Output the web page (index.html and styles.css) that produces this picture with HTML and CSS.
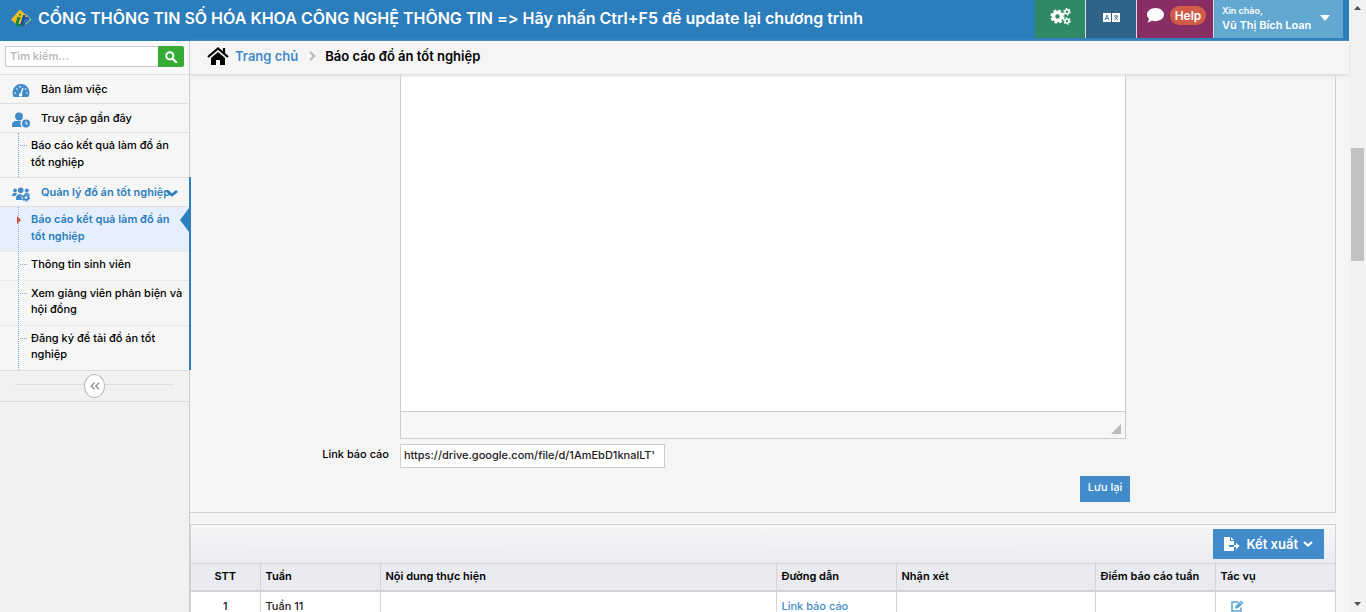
FILE: index.html
```html
<!DOCTYPE html>
<html lang="vi">
<head>
<meta charset="utf-8">
<title>Báo cáo đồ án tốt nghiệp</title>
<link rel="stylesheet" href="styles.css">
</head>
<body>
<div class="window">
  <div class="page">
    <header class="navbar">
      <a class="brand" href="#">
        <svg class="brand-logo" viewBox="0 0 22 20" aria-hidden="true">
          <path d="M10 1.500 1 11.500l5 4.500h4l7-8z" fill="#f8bb1d"/>
          <path d="M16 6.500l5 5-7 6" fill="none" stroke="#d5c464" stroke-width="1"/>
          <path d="M7.500 9h3L8.300 16.500h-3z" fill="#12844f"/>
          <circle cx="10" cy="6.800" r="1" fill="#167b5c"/>
          <path d="M13 7h2.600l-.6 2.200h3.300l-.6 2h-3.300l-1.200 4h2l-.7 2.800h-4.500z" fill="#1c4f9d"/>
          <path d="M6 16h6l-.5 2.500H7z" fill="#0e7e55"/>
        </svg>
        <span>CỔNG THÔNG TIN SỐ HÓA KHOA CÔNG NGHỆ THÔNG TIN =&gt; Hãy nhấn Ctrl+F5 để update lại chương trình</span>
      </a>
      <nav class="tools" aria-label="Tài khoản">
        <button class="tool tool-green" type="button" aria-label="Cài đặt">
          <svg width="21" height="17" viewBox="0 0 21 17" aria-hidden="true">
            <g fill="none" stroke="#fff">
              <circle cx="7.500" cy="8.500" r="4" stroke-width="3.400"/>
              <circle cx="7.500" cy="8.500" r="6" stroke-width="2.200" stroke-dasharray="2.800 1.910"/>
              <circle cx="17" cy="3.800" r="2" stroke-width="1.600"/>
              <circle cx="17" cy="3.800" r="3.200" stroke-width="1.200" stroke-dasharray="1.600 1.750"/>
              <circle cx="17" cy="13" r="2" stroke-width="1.600"/>
              <circle cx="17" cy="13" r="3.200" stroke-width="1.200" stroke-dasharray="1.600 1.750"/>
            </g>
          </svg>
        </button>
        <button class="tool tool-navy" type="button" aria-label="Ngôn ngữ">
          <svg width="17" height="9" viewBox="0 0 17 9" aria-hidden="true">
            <path fill="#fff" d="M0 0h8v9H0zM9 0h8v9H9z"/>
            <path d="M2 7l2-5 2 5M3 5.500h2M11 3h4M13 2v1M14.500 3Q14 6 11.500 7M12 4l3 3" fill="none" stroke="#2f6489" stroke-width=".8"/>
          </svg>
        </button>
        <button class="tool tool-plum" type="button">
          <svg width="17" height="15" viewBox="0 0 17 15" aria-hidden="true"><path fill="#fff" d="M8.500 0C13.200 0 17 2.900 17 6.600s-3.800 6.600-8.500 6.600c-1.300 0-2.600-.2-3.700-.7C3.700 13.500 2.200 14.300.3 14.300c1-1 1.600-2.200 1.700-3.400C.7 9.700 0 8.200 0 6.600 0 2.900 3.800 0 8.500 0z"/></svg>
          <span class="badge">Help</span>
        </button>
        <button class="tool tool-user" type="button">
          <span class="user"><small>Xin chào,</small>Vũ Thị Bích Loan</span>
          <svg width="10" height="6" viewBox="0 0 10 6" aria-hidden="true"><path d="M0 0h10L5 6z" fill="#fff"/></svg>
        </button>
      </nav>
    </header>
    <div class="body">
      <aside class="sidebar">
        <form class="search">
          <input type="text" placeholder="Tìm kiếm..." aria-label="Tìm kiếm">
          <button type="submit" aria-label="Tìm">
            <svg width="12" height="12" viewBox="0 0 12 12" aria-hidden="true"><circle cx="4.800" cy="4.800" r="3.600" fill="none" stroke="#fff" stroke-width="2"/><path d="M7.500 7.500 11 11" stroke="#fff" stroke-width="2.400" stroke-linecap="round"/></svg>
          </button>
        </form>
        <ul class="menu">
          <li><a class="item" href="#">
            <svg class="item-icon" viewBox="0 0 18 16" aria-hidden="true"><path fill="#428bca" d="M9 1a8.500 8.500 0 0 0-8.500 8.500c0 1.800.5 3.400 1.300 4.500h14.400c.8-1.100 1.300-2.700 1.300-4.500A8.500 8.500 0 0 0 9 1z"/><path d="M8.500 12 11 5" stroke="#fff" stroke-width="1.300"/><g fill="#fff"><circle cx="8.600" cy="12" r="1.700"/><circle cx="3.200" cy="10" r=".8"/><circle cx="4.800" cy="6" r=".8"/><circle cx="8" cy="3.900" r=".8"/><circle cx="13.600" cy="6" r=".8"/><circle cx="14.900" cy="10" r=".8"/></g></svg>
            <span>Bàn làm việc</span></a></li>
          <li><a class="item" href="#">
            <svg class="item-icon" viewBox="0 0 18 16" aria-hidden="true"><g fill="#428bca"><circle cx="7" cy="4.500" r="3.900"/><path d="M0 15v-2c0-2.400 1.800-4 4-4h5.200a5 5 0 0 0 .8 6z"/><circle cx="14" cy="11.500" r="4"/></g><path d="M14 9.200V12h1.800" stroke="#fff" fill="none"/></svg>
            <span>Truy cập gần đây</span></a>
            <ul class="submenu">
              <li><a href="#">Báo cáo kết quả làm đồ án tốt nghiệp</a></li>
            </ul></li>
          <li class="open"><a class="item" href="#">
            <svg class="item-icon" viewBox="0 0 18 16" aria-hidden="true"><g fill="#428bca"><circle cx="3" cy="4.500" r="1.900"/><circle cx="8.700" cy="4.300" r="2.800"/><circle cx="14.800" cy="4.500" r="1.900"/><path d="M0 10c0-2 1-3 2.500-3h2c.5 0 .7.300.7.600C4.300 8.300 3.700 9 3.500 10zM4 14v-2c0-2.300 1.500-3.800 3.500-3.800h2.600c-.8 1.800-.8 4 .5 5.800zM13 7h2.500c1.500 0 2.300.8 2.500 2l-2-1h-3z"/></g><circle cx="14" cy="11.500" r="2.300" fill="none" stroke="#428bca" stroke-width="2"/><circle cx="14" cy="11.500" r="3.600" fill="none" stroke="#428bca" stroke-width="1.200" stroke-dasharray="1.900 1.870"/></svg>
            <span>Quản lý đồ án tốt nghiệp</span>
            <svg class="item-caret" width="12" height="7" viewBox="0 0 12 7" aria-hidden="true"><path d="M1 1l5 4 5-4" fill="none" stroke="#2b7dbc" stroke-width="2.600"/></svg></a>
            <ul class="submenu">
              <li class="active"><a href="#">Báo cáo kết quả làm đồ án tốt nghiệp</a></li>
              <li><a href="#">Thông tin sinh viên</a></li>
              <li><a href="#">Xem giảng viên phản biện và hội đồng</a></li>
              <li><a href="#">Đăng ký đề tài đồ án tốt nghiệp</a></li>
            </ul></li>
        </ul>
        <div class="collapse">
          <button type="button" aria-label="Thu gọn">
            <svg width="10" height="8" viewBox="0 0 10 8" aria-hidden="true"><path d="M4.500.8 1.300 4l3.200 3.200M9 .8 5.800 4 9 7.200" fill="none" stroke="#999" stroke-width="1.600"/></svg>
          </button>
        </div>
      </aside>
      <main class="main">
        <nav class="crumbs" aria-label="Breadcrumb">
          <svg width="22" height="18" viewBox="0 0 22 18" aria-hidden="true"><path d="M1 10 11 1.500 21 10M17 1v5" fill="none" stroke="#000" stroke-width="2.200"/><path d="M11 5l7 6v7h-5v-5H9v5H4v-7z"/></svg>
          <a href="#">Trang chủ</a>
          <svg class="crumb-sep" width="7" height="10" viewBox="0 0 7 10" aria-hidden="true"><path d="M1.200 1 5.200 5l-4 4" fill="none" stroke="#b2b6bf" stroke-width="2"/></svg>
          <span>Báo cáo đồ án tốt nghiệp</span>
        </nav>
        <form class="panel">
          <div class="editor">
            <textarea class="editor-area" aria-label="Nội dung"></textarea>
            <div class="editor-foot">
              <svg width="10" height="10" viewBox="0 0 10 10" aria-hidden="true"><path d="M10 0v10H0z" fill="#bbb"/></svg>
            </div>
          </div>
          <label class="field-label" for="link">Link báo cáo</label>
          <div class="field"><input id="link" type="text" value="https://drive.google.com/file/d/1AmEbD1knalLT'"></div>
          <div class="actions"><button type="button">Lưu lại</button></div>
        </form>
        <section class="report">
          <div class="report-bar">
            <button type="button">
              <svg width="16" height="14" viewBox="0 0 16 14" aria-hidden="true"><path d="M0 0h6v4h4v4H5v2h5v4H0zM7 0l3 3H7z" fill="#fff"/><path d="M10 8h2V5.500L15.500 9 12 12.500V10h-2z" fill="#fff"/></svg>
              <span>Kết xuất</span>
              <svg width="10" height="6" viewBox="0 0 10 6" aria-hidden="true"><path d="M1 1l4 3.500L9 1" fill="none" stroke="#fff" stroke-width="2.200"/></svg>
            </button>
          </div>
          <table>
            <colgroup><col class="c-no"><col class="c-mid"><col><col class="c-mid"><col class="c-note"><col class="c-mid"><col class="c-mid"></colgroup>
            <thead><tr><th>STT</th><th>Tuần</th><th>Nội dung thực hiện</th><th>Đường dẫn</th><th>Nhận xét</th><th>Điểm báo cáo tuần</th><th>Tác vụ</th></tr></thead>
            <tbody><tr><td>1</td><td>Tuần 11</td><td></td><td><a href="#">Link báo cáo</a></td><td></td><td></td><td>
              <a class="edit" href="#" aria-label="Sửa"><svg width="13" height="12" viewBox="0 0 13 12" aria-hidden="true"><path d="M7.500 2H1v9h9V7.500" fill="none" stroke="#5ba4d4" stroke-width="1.600"/><path d="M4 8.500l.5-2.500L10 .5 12.500 3 7 8.300z" fill="#5ba4d4"/><path d="M9 2l2 2" stroke="#fff" stroke-width=".7"/></svg></a></td></tr></tbody>
          </table>
        </section>
      </main>
    </div>
  </div>
  <div class="scrollbar" aria-hidden="true">
    <svg viewBox="0 0 17 17"><path d="M8.500 6 12 10H5z" fill="#505050"/></svg>
    <span class="thumb"></span>
    <svg class="down" viewBox="0 0 17 17"><path d="M8.500 11 12 7H5z" fill="#505050"/></svg>
  </div>
</div>
</body>
</html>
```

FILE: styles.css
```css
* { box-sizing: border-box; }
body { margin: 0; font: 500 11px/16px Inter, "Noto Sans", sans-serif; font-optical-sizing: none; font-variant-ligatures: no-contextual; color: #000; background: #f5f5f5; }
button, input, textarea { font: inherit; border-radius: 0; margin: 0; }
button { border: 0; padding: 0; cursor: pointer; }
a { color: #428bca; text-decoration: none; }
ul { list-style: none; margin: 0; padding: 0; }
svg { flex: none; display: block; }

.window { display: flex; height: 100vh; overflow: hidden; }
.page { flex: 1; min-width: 0; display: flex; flex-direction: column; }

.navbar { flex: none; display: flex; justify-content: space-between; background: #2b7dbc; padding: 0 6px 3px 10px; }
.brand { display: flex; align-items: center; gap: 6px; padding-bottom: 2px; color: #fff; font-size: 16px; line-height: 20px; font-weight: 600; white-space: nowrap; }
.brand-logo { width: 22px; height: 20px; }
.tools { display: flex; height: 38px; }
.tool { display: flex; align-items: center; justify-content: center; color: #fff; padding: 0 0 4px; border-left: 1px solid #ddd; }
.tool-green { width: 50px; background: #2e8965; border-left: 0; padding-bottom: 6px; }
.tool-navy { width: 51px; background: #2f6489; }
.tool-plum { width: 77px; background: #892e65; gap: 6px; padding: 0 6px 8px 9px; }
.tool-user { width: 130px; background: #62a8d1; justify-content: space-between; padding: 0 13px 2px 8px; font-weight: 600; text-align: left; }
.badge { background: #d15b47; border-radius: 10px; padding: 0 5px; font-size: 12px; line-height: 19px; font-weight: 600; }
.user, .user small { line-height: 14px; }
.user { white-space: nowrap; }
.user small { display: block; font-size: 9px; }

.body { flex: 1; min-height: 0; display: flex; }
.sidebar { flex: none; width: 190px; background: #f1f1f1; border-right: 1px solid #ccc; }
.search { display: flex; background: #f9f9f9; padding: 5px 5px 7px; }
.search input { flex: 1; min-width: 0; height: 21px; border: 1px solid #ccc; border-right: 0; padding: 0 4px 2px; background: #fff; }
.search input::placeholder { color: #bbb; opacity: 1; font-weight: 600; }
.search button { width: 26px; height: 21px; background: #35aa35; border-radius: 0 2px 2px 0; display: grid; place-items: center; }
.menu { background: #f6f6f6; border-bottom: 1px solid #ddd; }
.menu > li { border-top: 1px solid #e0e0e0; }
.item { position: relative; display: flex; align-items: center; height: 28px; padding-left: 12px; gap: 11px; color: #000; white-space: nowrap; }
.item-icon { width: 18px; height: 16px; margin-top: 4px; }
.item-caret { position: absolute; right: 11px; top: 12px; }
.open { position: relative; }
.open::after { content: ""; position: absolute; z-index: 2; top: -1px; bottom: 0; right: -2px; width: 2px; background: #2b7dbc; }
.open > .item { color: #2b7dbc; font-weight: 600; }
.submenu { position: relative; border-top: 1px solid #e0e0e0; }
.submenu::before { content: ""; position: absolute; z-index: 1; left: 18px; top: 0; bottom: 0; border-left: 1px dotted #7fa8cc; }
.submenu li { position: relative; border-top: 1px dotted #ddd; }
.submenu li:first-child { border-top: 0; }
.submenu li::before { content: ""; position: absolute; left: 20px; top: 12px; width: 7px; border-top: 1px dotted #7fa8cc; }
.submenu a { display: block; color: #000; padding: 4px 3px 8px 31px; }
.submenu li:first-child a { padding: 4px 12px 6px 31px; line-height: 17px; }
.submenu .active { background: #e6f0fd; }
.submenu .active a { color: #2b7dbc; font-weight: 600; }
.submenu .active::before { left: 17px; top: 9px; width: 0; border: solid transparent; border-width: 4px 0 4px 4px; border-left-color: #e03c1f; }
.submenu .active::after { content: ""; position: absolute; right: 0; top: 1px; border: solid transparent; border-width: 12px 9px 12px 0; border-right-color: #2b7dbc; }
.collapse { border-bottom: 1px solid #ddd; padding: 3px 15px; display: flex; align-items: center; background: #f1f1f1; }
.collapse::before, .collapse::after { content: ""; flex: 1; border-top: 1px solid #ddd; margin-bottom: 3px; }
.collapse button { width: 21px; height: 24px; border: 1px solid #bbb; border-radius: 50%; background: #fff; display: grid; place-items: center; }

.main { flex: 1; min-width: 0; }
.crumbs { position: relative; display: flex; align-items: center; height: 34px; padding: 0 17px 3px; gap: 6px; background: #f5f5f5; border-bottom: 1px solid #e0e0e0; box-shadow: 0 1px 3px #ddd; font-size: 13px; font-weight: 600; }
.crumb-sep { margin: 0 3px 0 5px; }
.panel { display: grid; grid-template-columns: 210fr 726fr 209fr; margin-right: 13px; border: 1px solid #d0d0d0; border-width: 0 1px 1px 0; padding-bottom: 10px; }
.editor { grid-column: 2; border: 1px solid #ccc; border-top: 0; background: #fff; }
.editor-area { display: block; width: 100%; height: 336px; border: 0; resize: none; background: #fff; }
.editor-foot { display: flex; justify-content: flex-end; padding: 12px 4px 4px; border-top: 1px solid #ccc; background: #f7f7f7; }
.field-label { grid-column: 1; text-align: right; padding: 7px 11px 0 0; }
.field { padding-top: 5px; }
.field input { width: 265px; height: 24px; border: 1px solid #ccc; padding: 0 3px 2px; background: #fff; color: #222; }
.actions { grid-column: 2; display: flex; justify-content: flex-end; padding-top: 8px; margin-right: -4px; }
.actions button { width: 50px; height: 26px; padding-bottom: 4px; background: #428bca; color: #fff; }

.report { margin: 11px 13px 0 0; border: 1px solid #d3d3d5; }
.report-bar { display: flex; justify-content: flex-end; padding: 4px 11px; background: linear-gradient(#f7f7f8, #eaebf0); }
.report-bar button { display: flex; align-items: center; gap: 6px; height: 30px; padding: 0 11px; background: #428bca; color: #fff; font-size: 13px; font-weight: 600; }
.report-bar span { margin-right: -1px; }
table { width: 100%; table-layout: fixed; border-collapse: collapse; }
.c-no { width: 69px; }
.c-mid { width: 120px; }
.c-note { width: 199px; }
th, td { border-left: 1px solid #d3d3d5; padding: 0 5px; text-align: left; white-space: nowrap; }
th { height: 27px; padding-bottom: 2px; background: #eaebf0; border-top: 1px solid #d3d3d5; border-bottom: 2px solid #d3d3d5; font-weight: 600; }
td { height: 29px; background: #fff; color: #222; }
th:first-child, td:first-child { border-left: 0; text-align: center; }
.edit { display: block; padding-left: 10px; }

.scrollbar { flex: none; width: 17px; display: grid; grid-template-rows: 17px 131fr 113fr 334fr 17px; background: #f1f1f1; }
.scrollbar svg { width: 17px; height: 17px; }
.thumb { grid-row: 3; background: #c1c1c1; margin: 0 2px; }
.down { grid-row: 5; }
```
